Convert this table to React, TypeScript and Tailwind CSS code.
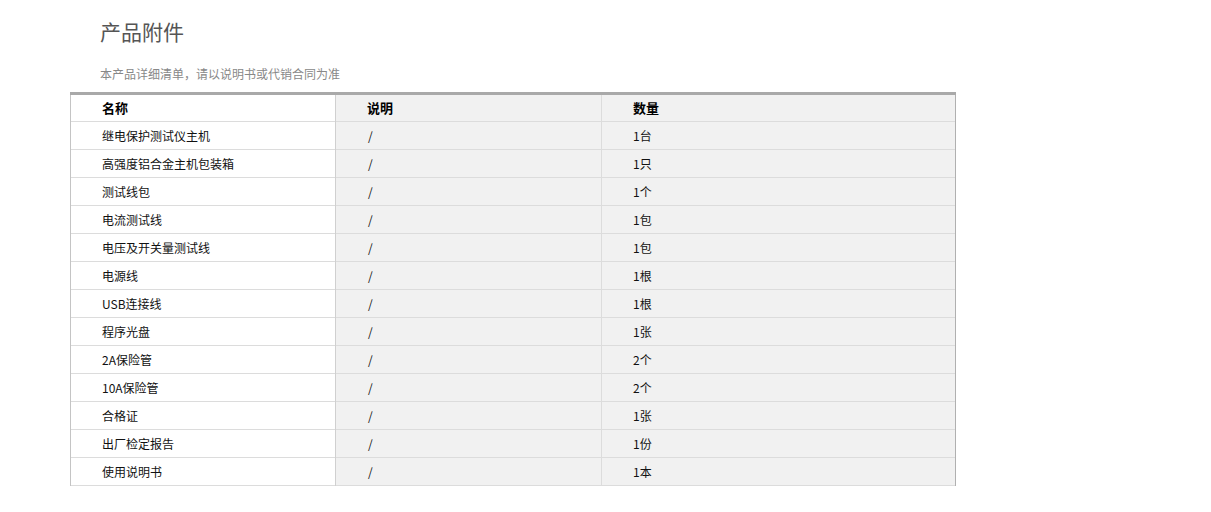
const rows: [string, string, string][] = [
  ["继电保护测试仪主机", "/", "1台"],
  ["高强度铝合金主机包装箱", "/", "1只"],
  ["测试线包", "/", "1个"],
  ["电流测试线", "/", "1包"],
  ["电压及开关量测试线", "/", "1包"],
  ["电源线", "/", "1根"],
  ["USB连接线", "/", "1根"],
  ["程序光盘", "/", "1张"],
  ["2A保险管", "/", "2个"],
  ["10A保险管", "/", "2个"],
  ["合格证", "/", "1张"],
  ["出厂检定报告", "/", "1份"],
  ["使用说明书", "/", "1本"],
];

const font = { fontFamily: '"Noto Sans CJK SC", "Liberation Sans", sans-serif' };

export default function App() {
  return (
    <div className="w-[1211px] h-[512px] bg-white" style={font}>
      <div className="pl-[70px] pt-[17px]">
        {/* Title */}
        <h2 className="pl-[30px] text-[21px] leading-[28px] text-[#555]">产品附件</h2>
        <p className="pl-[30px] mt-[21px] text-[12px] leading-[16px] text-[#888]">
          本产品详细清单，请以说明书或代销合同为准
        </p>
        {/* Table */}
        <table className="mt-[10px] w-[886px] border-collapse border-t-[3px] border-t-[#a9a9a9] text-[12px] text-[#111]">
          <thead>
            <tr className="h-[28px] border-b border-[#dcdcdc]">
              <th className="w-[265px] border-l border-[#c4c4c4] bg-white pl-[31px] text-left font-bold text-[13px] text-black">名称</th>
              <th className="w-[266px] border-l border-[#d0d0d0] bg-[#f1f1f1] pl-[31px] text-left font-bold text-[13px] text-black">说明</th>
              <th className="border-l border-r border-l-[#dcdcdc] border-r-[#b0b0b0] bg-[#f1f1f1] pl-[31px] text-left font-bold text-[13px] text-black">数量</th>
            </tr>
          </thead>
          <tbody>
            {rows.map((r, i) => (
              <tr key={i} className="h-[28px] border-b border-[#dcdcdc]">
                <td className="border-l border-[#c4c4c4] bg-white pl-[31px]">{r[0]}</td>
                <td className="border-l border-[#d0d0d0] bg-[#f1f1f1] pl-[32px]">{r[1]}</td>
                <td className="border-l border-r border-l-[#dcdcdc] border-r-[#b0b0b0] bg-[#f1f1f1] pl-[31px]">{r[2]}</td>
              </tr>
            ))}
          </tbody>
        </table>
      </div>
    </div>
  );
}
